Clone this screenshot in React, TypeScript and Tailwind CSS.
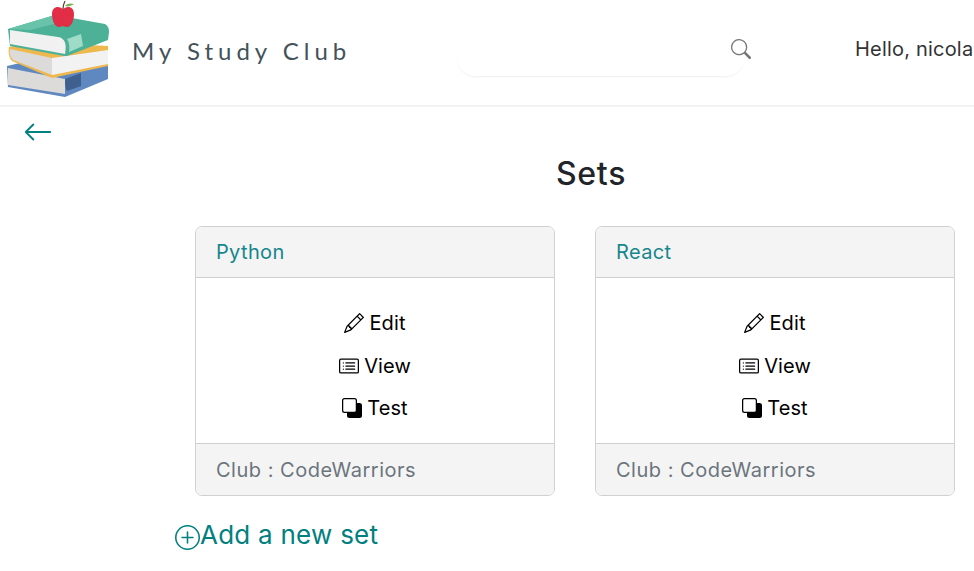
import { BsArrowLeft, BsCardList, BsPencil, BsPlusCircle, BsSearch, BsSubtract } from 'react-icons/bs'

const sets = [
  { name: 'Python', club: 'CodeWarriors' },
  { name: 'React', club: 'CodeWarriors' },
]

function Logo() {
  return (
    <svg viewBox="0 0 110 100" className="w-[110px] h-[100px] shrink-0">
      {/* blue book */}
      <path d="M7 66 L20 63 L108 64 L108 79 L65 97 L8 87 Z" fill="#5f88c0" />
      <path d="M8 68 L65 79 L65 94 L8 85 Z" fill="#dcdbd9" />
      <path d="M65 79 L81 73 L81 86 L67 91 C65 88 65 83 65 79 Z" fill="#3f5f8e" />
      {/* yellow book */}
      <path d="M9 47 L30 42 L108 46 L108 66 L52 78 L12 61 C9 58 8 52 9 47 Z" fill="#eeb84d" />
      <path d="M10 49 L52 58 L52 75 L13 60 C10 57 9 53 10 49 Z" fill="#dcdbd9" />
      <path d="M52 58 L108 50 L108 64 L52 75 Z" fill="#f2f2f2" />
      {/* green book */}
      <path d="M8 29 L55 15 L105 24 C108 26 109 28 109 32 L108 40 L67 56 L64 56 L10 46 Z" fill="#4db197" />
      <path d="M8 29 L55 15 L62 22 L30 30 Z" fill="#69c3ab" />
      <path d="M10 30 L58 37 C65 38 67 44 65 54 L10 44 Z" fill="#f1f1f1" />
      <path d="M67 39 L81 34 L83 46 L69 52 C70 47 69 42 67 39 Z" fill="#9fdcc8" />
      {/* apple */}
      <path d="M63 9 C58 5 52 7 52 14 C52 21 55 27 59 27 C61 27 62 26 63 26 C64 26 65 27 67 27 C71 27 74 21 74 14 C74 7 68 5 63 9 Z" fill="#e12d45" />
      <path d="M63 9 C63 6 64 3 65 1" stroke="#6b3a2a" strokeWidth="1.2" fill="none" />
      <path d="M65 6 C67 3 71 3 74 4 C71 6 68 7 65 6 Z" fill="#7fb356" />
    </svg>
  )
}

function SetCard({ name, club }: { name: string; club: string }) {
  return (
    <div className="w-[360px] h-[270px] border border-[#d0d0d0] rounded-[7px] overflow-hidden flex flex-col">
      <div className="h-[51px] bg-[#f4f4f4] border-b border-[#cfcfcf] px-5 flex items-center text-[20px] tracking-[0.35px] text-[#14868c]">
        {name}
      </div>
      <div className="flex-1 flex flex-col items-center pt-[24px] text-[20px] leading-[42.5px] tracking-[0.1px] text-black">
        <a className="flex items-center gap-[5px]"><BsPencil className="w-5 h-5" />Edit</a>
        <a className="flex items-center gap-[5px]"><BsCardList className="w-5 h-5" />View</a>
        <a className="flex items-center gap-[5px]"><BsSubtract className="w-5 h-5" />Test</a>
      </div>
      <div className="h-[52px] bg-[#f4f4f4] border-t border-[#cfcfcf] px-5 flex items-center text-[20px] tracking-[0.5px] text-[#6c757d]">
        Club : {club}
      </div>
    </div>
  )
}

export default function App() {
  return (
    <div className="w-[974px] h-[571px] overflow-hidden bg-white font-['Inter',sans-serif]">
      <header className="h-[107px] border-b-2 border-[#f2f2f2] flex items-start">
        <div className="shrink-0"><Logo /></div>
        <div className="ml-[22px] mt-[34px] w-[324px] shrink-0 whitespace-nowrap text-[24px] leading-[34px] tracking-[5px] text-[#44525a] font-['Lato',sans-serif]">
          My Study Club
        </div>
        <div className="w-[289px] h-[76px] shrink-0 rounded-b-[20px] shadow-[0_2px_2px_-1px_rgba(0,0,0,0.07)] relative">
          <BsSearch className="w-5 h-5 text-[#777] absolute left-[275px] top-[39px]" />
        </div>
        <div className="ml-[110px] mt-[36px] whitespace-nowrap text-[20px] leading-[26px] tracking-[0.2px] text-[#333]">Hello, nicola</div>
      </header>
      <main>
        <div className="pl-[23px] pt-[10px] h-[30px] text-[#008080]">
          <BsArrowLeft className="w-[30px] h-[30px]" />
        </div>
        <h1 className="mt-[17px] pl-[556px] text-[32px] leading-[40px] font-medium tracking-[0.7px] text-[#212529]">Sets</h1>
        <div className="mt-[32px] pl-[195px] flex gap-[40px]">
          {sets.map(s => <SetCard key={s.name} {...s} />)}
        </div>
        <div className="mt-[20px] pl-[175px] flex items-center text-[26px] leading-[38px] tracking-[0.25px] text-[#008080]">
          <BsPlusCircle className="w-[25px] h-[25px] mt-[4px]" />
          Add a new set
        </div>
      </main>
    </div>
  )
}
